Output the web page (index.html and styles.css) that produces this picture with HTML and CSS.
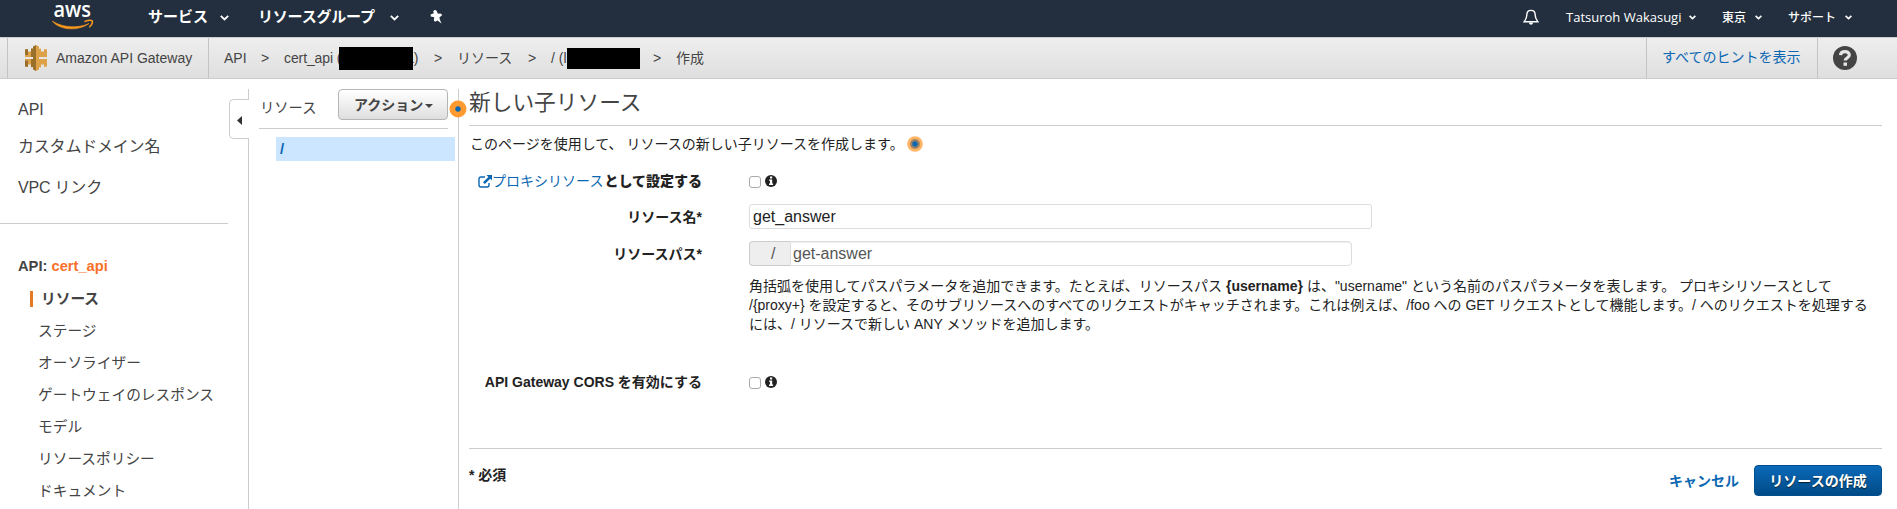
FILE: index.html
```html
<!DOCTYPE html>
<html lang="ja">
<head>
<meta charset="utf-8">
<title>Amazon API Gateway</title>
<link rel="stylesheet" href="styles.css">
</head>
<body>
<header class="topbar">
  <svg class="logo" width="42" height="31" viewBox="0 -3 42 31">
    <text class="logo-text" x="1.500" y="14" textLength="37.500" lengthAdjust="spacingAndGlyphs">aws</text>
    <path d="M.3 18.200C12 25 26 25.500 37 20.500 27 28 9 28 .3 18.200Z" fill="#f8981d" stroke="#f8981d" stroke-width=".6" stroke-linejoin="round"/>
    <path d="M33 18.400c3-1.100 6-1.400 7.200-.6.6 1.500-.6 4.200-2.500 6" fill="none" stroke="#f8981d" stroke-width="1.500" stroke-linecap="round"/>
  </svg>
  <span class="nav services">サービス</span>
  <svg class="chev chev-a" width="9" height="6" viewBox="0 0 9 6"><path d="M.8.8 4.500 4.500 8.200.8"/></svg>
  <span class="nav groups">リソースグループ</span>
  <svg class="chev chev-b" width="9" height="6" viewBox="0 0 9 6"><path d="M.8.8 4.500 4.500 8.200.8"/></svg>
  <svg class="pin" width="13" height="14" viewBox="0 0 13 14"><path fill="#fff" d="M4.500 0 6.200.3 8 3.800 10.500 3.400 12.300 5 9.400 7.400 9.800 9.600 11.500 13.500 7.500 10.600 5 11.800 3.800 10.300 4.300 7.200.8 6.600.6 4.400 3.800 3.300 3.200 1.200Z"/></svg>
  <svg class="bell" width="16" height="17" viewBox="0 0 16 17"><path d="M8 1.400c-3 0-4.200 2-4.200 4.600C3.800 9.500 2.500 11 1.200 12.700h13.600C13.500 11 12.200 9.500 12.200 6 12.200 3.400 11 1.400 8 1.400Z" fill="none" stroke="#fff" stroke-width="1.400"/><path d="M6 13.500h4c0 3-4 3-4 0Z" fill="#fff"/></svg>
  <span class="acct user">Tatsuroh Wakasugi</span>
  <svg class="chev sm chev-c" width="7" height="5" viewBox="0 0 7 5"><path d="M.6.8 3.500 3.600 6.400.8"/></svg>
  <span class="acct region">東京</span>
  <svg class="chev sm chev-d" width="7" height="5" viewBox="0 0 7 5"><path d="M.6.8 3.500 3.600 6.400.8"/></svg>
  <span class="acct support">サポート</span>
  <svg class="chev sm chev-e" width="7" height="5" viewBox="0 0 7 5"><path d="M.6.8 3.500 3.600 6.400.8"/></svg>
</header>

<nav class="crumbbar">
  <div class="service">
    <svg class="service-icon" width="22" height="26" viewBox="0 0 22 26">
      <path fill="#dda148" d="M0 4.500 3 4v2.500h3V3.500l2 .5v18l-2 .5v-3H3V22l-3-.5V14h8v-2H0Z"/>
      <path fill="#dda148" d="m22 4.500-3-.5v2.500h-3V3.500l-2 .5v18l2 .5v-3h3V22l3-.5V14h-8v-2h8Z"/>
      <path fill="#99702a" d="M0 4.500 3 4v6H0Zm0 11h3V22l-3-.5ZM6 3.500h2v8.500H6ZM6 14h2v8H6Z"/>
      <path fill="#99702a" d="M11 0 8 1.500v23l3 1.500Z"/><path fill="#dda148" d="m11 0 3 1.500v23L11 26Z"/>
    </svg>
    <span>Amazon API Gateway</span>
  </div>
  <div class="crumbs">
    <span class="c1">API</span><span class="c2 gt">&gt;</span>
    <span class="c3">cert_api (</span><span class="redact r1"></span><span class="c4">a)</span>
    <span class="c5 gt">&gt;</span><span class="c6">リソース</span><span class="c7 gt">&gt;</span>
    <span class="c8">/ (l</span><span class="redact r2"></span><span class="c9 gt">&gt;</span><span class="c10">作成</span>
  </div>
  <a class="hints">すべてのヒントを表示</a>
  <div class="help">
    <svg width="24" height="24" viewBox="0 0 24 24"><circle cx="12" cy="12" r="12" fill="#444"/><path d="M7.500 9.200C7.800 4.500 16.200 4.300 16.300 9c0 3-4.100 3-4.100 5.500" fill="none" stroke="#e6e6e6" stroke-width="3.200"/><path d="M10.500 16.500h3.500v3.300h-3.500z" fill="#e6e6e6"/></svg>
  </div>
</nav>

<div class="body">
  <aside class="side">
    <div class="top-links">
      <a class="l1">API</a><a class="l2">カスタムドメイン名</a><a class="l3">VPC リンク</a>
    </div>
    <div class="api-name">API: <span>cert_api</span></div>
    <div class="menu">
      <a class="active">リソース</a><a>ステージ</a><a>オーソライザー</a><a>ゲートウェイのレスポンス</a><a>モデル</a><a>リソースポリシー</a><a>ドキュメント</a>
    </div>
  </aside>
  <div class="rail">
    <div class="rail-top"></div>
    <div class="rail-tab"><svg width="5" height="9" viewBox="0 0 5 9"><path d="M5 0v9L0 4.500z" fill="#333"/></svg></div>
    <div class="rail-line"></div>
  </div>
  <section class="tree">
    <div class="tree-head">
      <span>リソース</span>
      <button class="action">アクション<svg width="8" height="4" viewBox="0 0 8 4"><path d="M0 0h8L4 4z" fill="#444"/></svg></button>
    </div>
    <div class="tree-item">/</div>
  </section>
  <main class="main">
    <svg class="hint-dot" width="18" height="18" viewBox="0 0 18 18"><circle cx="9" cy="9" r="8.500" fill="#ff9a30"/><circle cx="9" cy="9" r="2.700" fill="#0b68b3"/></svg>
    <h1>新しい子リソース</h1>
    <p class="intro">このページを使用して、 リソースの新しい子リソースを作成します。<svg width="16" height="16" viewBox="0 0 16 16"><circle cx="8" cy="8" r="7.800" fill="#ffb565"/><circle cx="8" cy="8" r="5" fill="#a08363"/><circle cx="8" cy="8" r="2.700" fill="#0b68b3"/></svg></p>
    <div class="row proxy">
      <label><svg class="ext" width="14" height="13" viewBox="0 0 14 13"><path d="M7 2H3Q1 2 1 4v6q0 2 2 2h6q2 0 2-2V8" fill="none" stroke="#0b67b2" stroke-width="1.400"/><path d="M8.500 0H14v5.500L12.200 3.700 6.800 9.100 5 7.300l5.400-5.400z" fill="#0b67b2"/></svg><a>プロキシリソース</a><b>として設定する</b></label>
      <span class="check"></span><svg class="info" width="12" height="12" viewBox="0 0 12 12"><circle cx="6" cy="6" r="6" fill="#222"/><path d="M5 1.600h2.200v1.900H5zM4.200 4.600h3v3.900h.9V10H4V8.500h1V6h-.8z" fill="#fff"/></svg>
    </div>
    <div class="row name"><label>リソース名*</label><div class="input">get_answer</div></div>
    <div class="row path"><label>リソースパス*</label><div class="group"><span class="addon">/</span><div class="input">get-answer</div></div></div>
    <div class="help-text">
      <div>角括弧を使用してパスパラメータを追加できます。たとえば、リソースパス <b>{username}</b> は、"username" という名前のパスパラメータを表します。 プロキシリソースとして</div>
      <div>/{proxy+} を設定すると、そのサブリソースへのすべてのリクエストがキャッチされます。これは例えば、/foo への GET リクエストとして機能します。/ へのリクエストを処理する</div>
      <div>には、/ リソースで新しい ANY メソッドを追加します。</div>
    </div>
    <div class="row cors"><label>API Gateway CORS を有効にする</label><span class="check"></span><svg class="info" width="12" height="12" viewBox="0 0 12 12"><circle cx="6" cy="6" r="6" fill="#222"/><path d="M5 1.600h2.200v1.900H5zM4.200 4.600h3v3.900h.9V10H4V8.500h1V6h-.8z" fill="#fff"/></svg></div>
    <footer class="foot">
      <span class="required">* 必須</span>
      <a class="cancel">キャンセル</a>
      <button class="create">リソースの作成</button>
    </footer>
  </main>
</div>
</body>
</html>
```
FILE: styles.css
```css
* { box-sizing: border-box; }
body {
  margin: 0;
  height: 509px;
  overflow: hidden;
  background: #fff;
  color: #444;
  font: 14px/20px "Liberation Sans", "Noto Sans CJK JP", sans-serif;
  white-space: nowrap;
}
svg { display: block; flex: none; }
button { font: inherit; font-weight: bold; padding: 0; }

.topbar { display: flex; height: 37px; background: #232f3e; color: #fff; }
.logo { margin: 0 0 0 52px; overflow: visible; }
.logo-text { font: 600 22px "Open Sans", sans-serif; fill: #fff; }
.nav { font-size: 15px; font-weight: bold; line-height: 20px; margin-top: 7px; flex: none; }
.services { width: 60px; margin-left: 54px; }
.groups { width: 118px; margin-left: 29px; letter-spacing: -.2px; }
.chev { margin-top: 15px; fill: none; stroke: #fff; stroke-width: 1.8; }
.chev-a { margin-left: 12px; }
.chev-b { margin-left: 14px; }
.pin { margin: 10px 0 0 31px; }
.bell { margin: 9px 0 0 1080px; }
.acct { font: 600 12px/18px "Open Sans", "Noto Sans CJK JP", sans-serif; margin-top: 8px; flex: none; }
.user { width: 114px; margin-left: 27px; font-weight: 500; font-size: 13px; }
.region, .support { font-family: "Noto Sans CJK JP", sans-serif; font-weight: 500; }
.region { width: 24px; margin-left: 26px; }
.support { width: 48px; margin-left: 26px; }
.sm { margin-top: 15px; stroke-width: 1.6; }
.chev-c { margin-left: 9px; }
.chev-d { margin-left: 9px; }
.chev-e { margin-left: 9px; }

.crumbbar {
  display: flex;
  height: 42px;
  border-top: 1px solid #ccc;
  border-bottom: 1px solid #ccc;
  background: linear-gradient(#eee, #dfdfdf);
}
.service { display: flex; width: 202px; margin-left: 7px; border: solid #c4c4c4; border-width: 0 1px; padding-left: 17px; line-height: 40px; }
.service-icon { margin: 7px 9px 0 0; }
.crumbs { display: flex; line-height: 40px; padding-left: 15px; flex: 1; }
.crumbs > span { flex: none; }
.gt { font-size: 14px; }
.c1 { width: 37px; }
.c2 { width: 23px; }
.c3 { width: 55px; letter-spacing: -.1px; }
.redact { background: #000; z-index: 1; }
.r1 { width: 74px; height: 23px; margin-top: 9px; }
.c4 { width: 28px; margin-left: -7px; }
.c5 { width: 23px; }
.c6 { width: 71px; }
.c7 { width: 23px; }
.c8 { width: 16px; }
.r2 { width: 73px; height: 21px; margin-top: 10px; }
.c9 { width: 23px; margin-left: 13px; }
.hints { width: 171px; border-left: 1px solid #c4c4c4; padding-left: 15px; color: #0b67b2; line-height: 39px; }
.help { width: 80px; border-left: 1px solid #c4c4c4; padding: 8px 0 0 15px; }

.body { display: flex; height: 430px; }
.side { width: 229px; flex: none; }
.top-links { height: 145px; border-bottom: 1px solid #ccc; width: 228px; padding-left: 18px; font-size: 16px; }
.top-links a { display: block; line-height: 24px; }
.l1 { padding-top: 19px; }
.l2 { padding-top: 13px; letter-spacing: -.2px; }
.l3 { padding-top: 17px; letter-spacing: -.2px; }
.api-name { font-size: 14.7px; font-weight: bold; padding: 32px 0 0 18px; height: 67px; }
.api-name span { color: #f8702a; }
.menu { font-size: 14.7px; padding-left: 30px; }
.menu a { display: block; height: 32px; line-height: 17px; padding-left: 8px; }
.menu .active { font-weight: bold; border-left: 3px solid #e47b24; height: 16px; margin-bottom: 16px; }

.rail { width: 20px; padding-top: 10px; flex: none; display: flex; flex-direction: column; }
.rail-top { height: 10px; border-right: 1px solid #ccc; }
.rail-tab { height: 40px; border: 1px solid #ccc; border-right: 0; border-radius: 5px 0 0 5px; padding: 16px 0 0 7px; }
.rail-line { flex: 1; border-right: 1px solid #ccc; }

.tree { width: 210px; margin-top: 10px; border-right: 1px solid #ccc; padding-left: 10px; flex: none; }
.tree-head { display: flex; width: 189px; height: 40px; border-bottom: 1px solid #ccc; justify-content: space-between; line-height: 39px; padding-left: 1px; font-size: 14.3px; }
.action { display: flex; width: 110px; height: 31px; border: 1px solid #b5b5b5; border-radius: 4px; background: linear-gradient(#fff, #dfdfdf); color: #444; font-size: 14px; line-height: 30px; padding-left: 15px; }
.action svg { margin: 14px 0 0 2px; }
.tree-item { margin: 8px 0 0 17px; width: 179px; height: 24px; background: #cce6ff; color: #0b67b2; font-size: 15px; font-weight: bold; line-height: 24px; padding-left: 4px; }

.main { position: relative; flex: 1; padding: 10px 15px 0 10px; color: #222; }
.hint-dot { position: absolute; left: -10px; top: 21px; }
h1 { margin: 0; height: 37px; border-bottom: 1px solid #ccc; font-size: 21.700px; font-weight: normal; line-height: 28px; color: #444; }
.intro { display: flex; margin: 0; height: 34px; padding-top: 8px; padding-left: 1px; white-space: pre; }
.intro svg { margin: 2px 0 0 3px; }
.row { display: flex; }
.row label { display: flex; justify-content: flex-end; width: 233px; margin-right: 47px; font-weight: bold; flex: none; }
.proxy { height: 44px; padding-top: 11px; }
.proxy a { font-weight: normal; color: #0b67b2; margin-right: 1px; }
.ext { margin: 4px 0 0; }
.check { width: 12px; height: 12px; border: 1px solid #aaa; border-radius: 3px; margin: 5px 4px 0 0; }
.info { margin-top: 4px; }
.name { height: 37px; }
.name label, .path label { line-height: 27px; }
.input { width: 623px; height: 25px; border: 1px solid #ddd; border-radius: 3px; font-size: 16px; line-height: 23px; padding-left: 3px; }
.path { height: 36px; }
.group { display: flex; }
.addon { width: 41px; height: 25px; border: 1px solid #ccc; border-right: 0; border-radius: 4px 0 0 4px; background: #eee; padding-left: 21px; font-size: 16px; line-height: 23px; color: #555; }
.group .input { width: 562px; border-radius: 0 4px 4px 0; color: #555; padding-left: 2px; box-shadow: inset 0 1px 1px #eee; }
.help-text { padding-left: 280px; line-height: 19px; height: 94px; }
.cors { height: 77px; padding-top: 1px; }
.foot { display: flex; border-top: 1px solid #ccc; font-weight: bold; }
.required { margin-top: 16px; }
.cancel { margin: 22px 15px 0 auto; color: #0b67b2; }
.create { width: 128px; height: 31px; margin-top: 16px; border: 1px solid #00508f; border-radius: 4px; background: linear-gradient(#0b69b8, #004b87); color: #fff; text-shadow: 0 1px 1px #023; }
```
